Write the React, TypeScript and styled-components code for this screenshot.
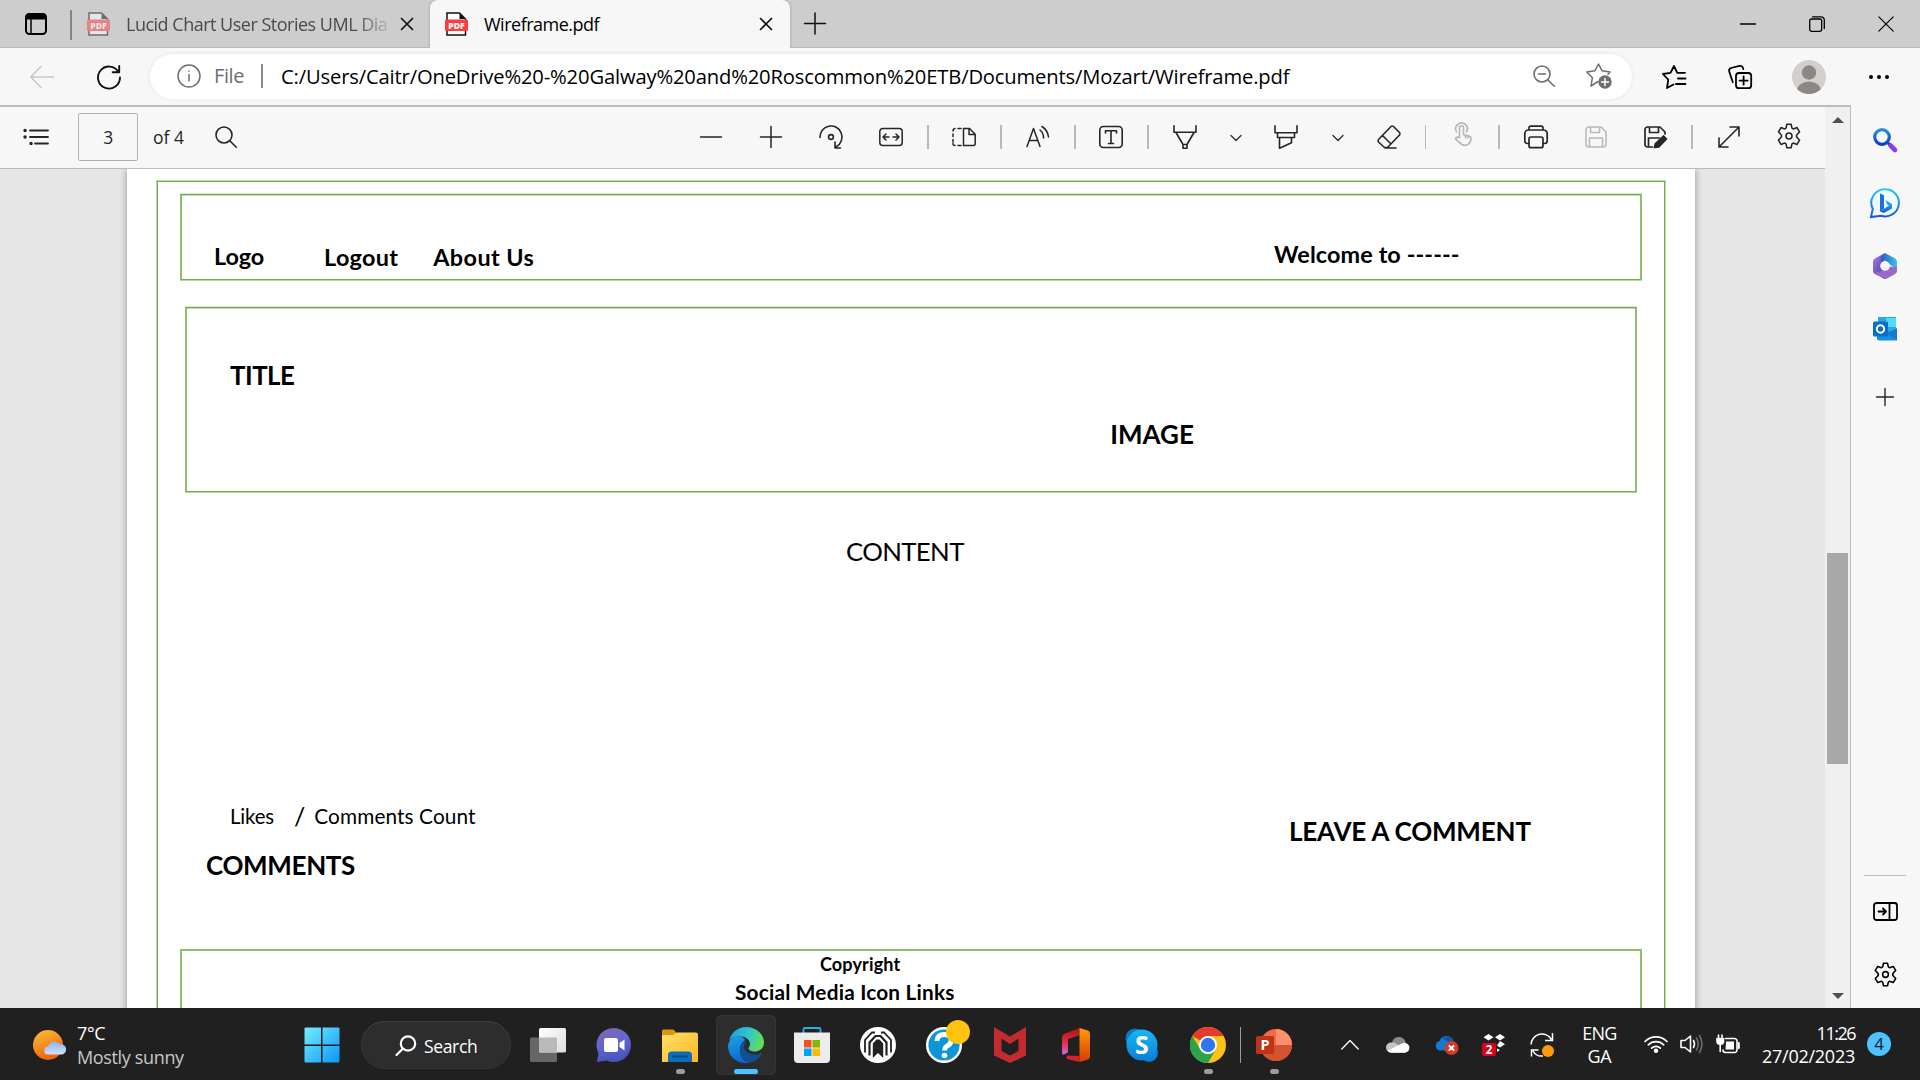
import React from "react";
import styled, { createGlobalStyle, css } from "styled-components";

const UI = `"Open Sans", "Noto Sans", sans-serif`;
const DOC = `Lato, "Open Sans", sans-serif`;
const GREEN = "#70ad47";
const SOFT_GREEN = "#8ebf6c";

const Global = createGlobalStyle`
  *, *::before, *::after { box-sizing: border-box; }
  html, body { margin: 0; padding: 0; overflow: hidden; }
  body { font-family: ${UI}; color: #000; }
  svg { display: block; flex: none; overflow: visible; }
`;

const Desktop = styled.div`
  width: 1920px;
  height: 1080px;
  display: flex;
  flex-direction: column;
  overflow: hidden;
  background: #f7f7f7;
`;

const Label = styled.span<{
  $size: number;
  $ls?: number;
  $bold?: boolean;
  $color?: string;
  $lh?: number;
  $ml?: number;
  $mt?: number;
}>`
  display: block;
  flex: none;
  width: max-content;
  white-space: pre;
  font-family: ${UI};
  font-size: ${(p) => p.$size}px;
  font-weight: ${(p) => (p.$bold ? 700 : 400)};
  letter-spacing: ${(p) => p.$ls ?? 0}px;
  line-height: ${(p) => p.$lh ?? 30}px;
  color: ${(p) => p.$color ?? "#000"};
  margin-left: ${(p) => p.$ml ?? 0}px;
  margin-top: ${(p) => p.$mt ?? 0}px;
`;
const DocText = styled(Label)`
  font-family: ${DOC};
`;

/* ---------- generic pieces ---------- */

const Slot = styled.div<{ $w: number; $dy?: number; $pl?: number }>`
  flex: none;
  width: ${(p) => p.$w}px;
  height: 100%;
  display: flex;
  align-items: center;
  justify-content: center;
  position: relative;
  padding-left: ${(p) => p.$pl ?? 0}px;
  padding-top: ${(p) => (p.$dy && p.$dy > 0 ? p.$dy * 2 : 0)}px;
  padding-bottom: ${(p) => (p.$dy && p.$dy < 0 ? -p.$dy * 2 : 0)}px;
`;
const Spacer = styled.div`
  flex: 1;
`;

type IconProps = { w?: number; h?: number; vb?: string; c?: string; sw?: number; children: React.ReactNode };
const Line = ({ w = 24, h = 24, vb, c = "#262626", sw = 1.5, children }: IconProps) => (
  <svg width={w} height={h} viewBox={vb ?? `0 0 ${w} ${h}`} fill="none" stroke={c} strokeWidth={sw} strokeLinecap="round" strokeLinejoin="round">
    {children}
  </svg>
);
const Art = ({ w, h, children }: { w: number; h: number; children: React.ReactNode }) => (
  <svg width={w} height={h} viewBox={`0 0 ${w} ${h}`}>{children}</svg>
);

const Gear = ({ c = "#262626", s = 26 }: { c?: string; s?: number }) => (
  <Line w={s} h={s} vb="0 0 26 26" c={c} sw={1.6}>
    <path d="M10.9 1.2h4.2l.7 3.2a1.600 1.600 0 002.200 1.300l3-1.100 2.600 4.200-2.300 2.400a2.600 2.600 0 000 3.600l2.300 2.400-2.600 4.200-3-1.100a1.600 1.600 0 00-2.200 1.300l-.7 3.200h-4.200l-.7-3.200A1.600 1.600 0 008 20.300l-3 1.100-2.600-4.200 2.300-2.400a2.600 2.600 0 000-3.600L2.400 8.800 5 4.600l3 1.100a1.600 1.600 0 002.200-1.300z" />
    <circle cx="13" cy="13" r="3" />
  </Line>
);
const Cross = () => (
  <Line w={14} h={14} c="#111" sw={1.7}><path d="M1.5 1.5l11 11M12.5 1.5l-11 11" /></Line>
);
const Magnifier = ({ c, minus }: { c?: string; minus?: boolean }) => (
  <Line w={22} h={22} c={c} sw={1.6}>
    <circle cx="9" cy="9" r="8" />
    <path d="M15 15l6.300 6.300" />
    {minus && <path d="M5.5 9h7" />}
  </Line>
);
const Chevron = () => (
  <Line w={12} h={8} sw={1.2}><path d="M1 1.500l5 5 5-5" /></Line>
);

/* ---------- tab strip ---------- */

const TabStrip = styled.header`
  flex: none;
  height: 48px;
  display: flex;
  background: #cdcdcd;
  box-shadow: inset 0 -1px 0 #b9b9b9;
`;
const TabDivider = styled.i`
  width: 2px;
  height: 30px;
  margin: 10px 0 0 10px;
  background: #858585;
`;
const Tab = styled.div<{ $active?: boolean; $w: number }>`
  flex: none;
  width: ${(p) => p.$w}px;
  height: 48px;
  display: flex;
  align-items: center;
  padding: 0 ${(p) => (p.$active ? 17 : 16)}px 0 15px;
  ${(p) =>
    p.$active &&
    css`
      background: #f7f7f7;
      border-radius: 8px 8px 0 0;
      box-shadow: 0 0 3px rgba(0, 0, 0, 0.25);
      clip-path: inset(0 -4px 0 -4px);
    `}
`;
const TabTitle = styled.div<{ $fade?: boolean }>`
  flex: none;
  margin-left: 16px;
  padding-bottom: 1px;
  ${(p) => p.$fade && css`mask-image: linear-gradient(90deg, #000 88%, rgba(0, 0, 0, 0.2) 100%);`}
`;

const PdfIcon = ({ dim }: { dim?: boolean }) => (
  <svg width="23" height="24" viewBox="0 0 23 24" opacity={dim ? 0.5 : 1}>
    <path d="M2 1h12.500l6 6v16H2z" fill="#fff" stroke="#111" strokeWidth="1.500" />
    <path d="M14.500 1v6h6z" fill="#111" />
    <rect x="0" y="7.500" width="23" height="11.500" rx="1" fill="#ff3b3b" />
    <text x="11.500" y="16.500" textAnchor="middle" fontFamily="Open Sans, sans-serif" fontWeight="800" fontSize="8.600" fill="#fff">PDF</text>
  </svg>
);

/* ---------- address bar ---------- */

const NavBar = styled.nav`
  flex: none;
  height: 57px;
  display: flex;
  align-items: center;
  background: #f7f7f7;
`;
const Address = styled.div`
  flex: none;
  width: 1482px;
  height: 45px;
  margin: 0 0 1px 17px;
  display: flex;
  align-items: center;
  padding-left: 27px;
  background: #fff;
  border-radius: 23px;
  box-shadow: 0 0 5px rgba(0, 0, 0, 0.08);
`;
const AddressDivider = styled.i`
  width: 2px;
  height: 24px;
  background: #8d8d8d;
  margin: 0 18px 0 17px;
`;
const Avatar = styled.div`
  width: 34px;
  height: 34px;
  border-radius: 50%;
  overflow: hidden;
  background: #d2d0cd;
`;

/* ---------- middle ---------- */

const Middle = styled.div`
  flex: none;
  height: 903px;
  display: flex;
`;
const Viewer = styled.main`
  flex: none;
  width: 1851px;
  display: flex;
  border-top: 2px solid #bcbcbc;
  border-right: 1px solid #bcbcbc;
`;
const ViewerBody = styled.div`
  flex: none;
  width: 1825px;
  display: flex;
  flex-direction: column;
`;
const PdfBar = styled.div`
  flex: none;
  height: 62px;
  display: flex;
  align-items: center;
  padding: 0 2px 2px 0;
  background: #f7f7f7;
  border-bottom: 1px solid #bcbcbc;
`;
const PageBox = styled.div`
  width: 60px;
  height: 48px;
  margin: 0 15px 0 18px;
  display: flex;
  align-items: center;
  justify-content: center;
  border: 1px solid #b2b2b2;
  border-radius: 2px;
`;
const Sep = styled.i`
  width: 1.5px;
  height: 24px;
  background: #b9b9b9;
`;
const Canvas = styled.div`
  flex: none;
  height: 839px;
  overflow: hidden;
  background: #e6e6e6;
  padding-left: 127px;
`;
const Page = styled.article`
  width: 1568px;
  height: 860px;
  padding: 12px 0 0 30px;
  background: #fff;
  box-shadow: 0 0 7px rgba(0, 0, 0, 0.38);
`;
const PageFrame = styled.div`
  width: 1508px;
  height: 860px;
  border: 1px solid ${GREEN};
  box-shadow: 0 0 0 1px rgba(112, 173, 71, 0.45);
`;
const Panel = styled.section<{ $w: number; $h: number; $ml: number; $mt: number }>`
  width: ${(p) => p.$w}px;
  height: ${(p) => p.$h}px;
  margin: ${(p) => p.$mt}px 0 0 ${(p) => p.$ml}px;
  display: flex;
  border: solid;
  border-width: 1px 2px;
  border-color: ${GREEN} ${SOFT_GREEN};
  box-shadow: 0 -1px 0 rgba(112, 173, 71, 0.25), 0 1px 0 rgba(112, 173, 71, 0.5), inset 0 1px 0 rgba(112, 173, 71, 0.45);
`;
const FooterPanel = styled(Panel)`
  flex-direction: column;
  border-width: 2px 2px 0;
  border-color: ${SOFT_GREEN};
  box-shadow: none;
`;
const Discussion = styled.section`
  display: flex;
  height: 98px;
  margin-top: 235px;
`;
const DiscussionLeft = styled.div`
  width: 1131px;
`;
const Counts = styled.div`
  display: flex;
  height: 30px;
  margin-left: 72px;
`;

const ScrollTrack = styled.div`
  flex: none;
  width: 25px;
  display: flex;
  flex-direction: column;
  align-items: center;
  background: #f0f0f0;
`;
const Thumb = styled.div`
  width: 21px;
  height: 211px;
  margin: 430px 0 229px;
  background: #a8a8a8;
`;
const Arrow = styled.i<{ $down?: boolean }>`
  border: 6px solid transparent;
  border-top: ${(p) => (p.$down ? "6px solid #505050" : "0")};
  border-bottom: ${(p) => (p.$down ? "0" : "6px solid #505050")};
  margin-top: ${(p) => (p.$down ? 0 : 10)}px;
`;
const Sidebar = styled.aside`
  flex: 1;
  display: flex;
  flex-direction: column;
  align-items: center;
  padding-right: 1px;
  padding-bottom: 6px;
  background: #f7f7f7;
`;
const SideCell = styled.div<{ $h: number }>`
  flex: none;
  height: ${(p) => p.$h}px;
  display: flex;
  align-items: center;
  justify-content: center;
`;
const SideRule = styled.i`
  width: 42px;
  height: 1px;
  background: #bcbcbc;
`;

/* ---------- taskbar ---------- */

const Taskbar = styled.footer`
  flex: none;
  height: 72px;
  display: flex;
  align-items: center;
  padding-top: 2px;
  background: #202020;
`;
const Weather = styled.div`
  width: 262px;
  display: flex;
  align-items: center;
  padding-left: 33px;
  margin-right: 26px;
`;
const Stack = styled.div<{ $align?: string; $w?: number; $ml?: number; $mr?: number }>`
  display: flex;
  flex-direction: column;
  align-items: ${(p) => p.$align ?? "flex-start"};
  width: ${(p) => (p.$w ? p.$w + "px" : "auto")};
  margin-left: ${(p) => p.$ml ?? 0}px;
  margin-right: ${(p) => p.$mr ?? 0}px;
`;
const SearchPill = styled.div`
  flex: none;
  width: 150px;
  height: 48px;
  margin: 0 4px 0 6px;
  padding: 0 0 0 34px;
  display: flex;
  align-items: center;
  border-radius: 24px;
  background: #2d2d2d;
  box-shadow: inset 0 1px 0 #3d3d3d, inset 0 0 0 1px #333;
  gap: 8px;
`;
const ActiveTile = styled.div`
  width: 60px;
  height: 60px;
  border-radius: 6px;
  display: flex;
  align-items: center;
  justify-content: center;
  background: #2d2d2d;
  box-shadow: inset 0 0 0 1px #353535, inset 0 1px 0 #434343;
`;
const Running = styled.i<{ $active?: boolean }>`
  position: absolute;
  left: 50%;
  bottom: 6px;
  width: ${(p) => (p.$active ? 24 : 9)}px;
  height: 5px;
  margin-left: ${(p) => (p.$active ? -12 : -4.5)}px;
  border-radius: 3px;
  background: ${(p) => (p.$active ? "#4cc2ff" : "#9b9b9b")};
`;
const AlertDot = styled.i`
  position: absolute;
  left: 35px;
  top: 10px;
  width: 24px;
  height: 24px;
  border-radius: 50%;
  background: #ffc20e;
`;
const TaskDivider = styled.i`
  width: 1px;
  height: 36px;
  margin-left: -1px;
  background: #9a9a9a;
`;
const NotifyBadge = styled.div`
  width: 24px;
  height: 24px;
  margin: 0 29px 2px 12px;
  border-radius: 50%;
  display: flex;
  align-items: center;
  justify-content: center;
  background: #4cc2ff;
`;

export default function App() {
  return (
    <Desktop>
      <Global />
      <TabStrip>
        <Slot $w={60} $pl={12}>
          <Line w={22} h={22} c="#000" sw={2}>
            <rect x="1" y="1" width="20" height="20" rx="3.500" />
            <path d="M1.500 5.500V4a3 3 0 013-3h13a3 3 0 013 3v1.500z" fill="#000" />
            <path d="M6 6v15" strokeWidth="1.500" />
          </Line>
        </Slot>
        <TabDivider />
        <Tab $w={358}>
          <PdfIcon dim />
          <TabTitle $fade><Label $size={18} $ls={-0.5} $color="#4a4a4a">Lucid Chart User Stories UML Dia</Label></TabTitle>
          <Spacer />
          <Cross />
        </Tab>
        <Tab $w={360} $active>
          <PdfIcon />
          <TabTitle><Label $size={18} $ls={-0.5}>Wireframe.pdf</Label></TabTitle>
          <Spacer />
          <Cross />
        </Tab>
        <Slot $w={50}><Line w={22} h={22} c="#111"><path d="M.5 10.500h21M11 0v21" /></Line></Slot>
        <Spacer />
        <Slot $w={69}><Line w={16} h={16} c="#000" sw={1.3}><path d="M.5 8h15" /></Line></Slot>
        <Slot $w={69}>
          <Line w={16} h={16} c="#000" sw={1.3}>
            <rect x=".7" y="3" width="12" height="12.300" rx="2" />
            <path d="M3.500.8h8.500a3.300 3.300 0 013.300 3.300v8.500" />
          </Line>
        </Slot>
        <Slot $w={69}><Line w={16} h={16} c="#000" sw={1.2}><path d="M.8.8l14.400 14.400M15.200.8L.8 15.200" /></Line></Slot>
      </TabStrip>

      <NavBar>
        <Slot $w={84}><Line c="#c9c9c9" sw={1.6}><path d="M23.500 12H1M11 1.500L.8 12 11 22.500" /></Line></Slot>
        <Slot $w={49}>
          <Line c="#111" sw={1.9}><path d="M21.500 7A11 11 0 1023 12.500M22.200 1v6.300h-6.500" /></Line>
        </Slot>
        <Address>
          <Line c="#6e6e6e"><circle cx="12" cy="12" r="11" /><path d="M12 10.500V17M12 7v.3" /></Line>
          <Label $size={20} $ls={-0.4} $ml={13} $color="#6e6e6e">File</Label>
          <AddressDivider />
          <Label $size={20.2} $ls={-0.16}>C:/Users/Caitr/OneDrive%20-%20Galway%20and%20Roscommon%20ETB/Documents/Mozart/Wireframe.pdf</Label>
          <Spacer />
          <Slot $w={43}><Magnifier c="#6e6e6e" minus /></Slot>
          <Slot $w={67}>
            <Line w={26} h={26} c="#6e6e6e">
              <path d="M12 18.500L5 23l1.400-8.300L.8 9l8-1.200L12.500 1 16 7.800l8 1.200-2 2.300" />
              <circle cx="19" cy="19" r="6.700" fill="#6e6e6e" stroke="none" />
              <path d="M19 15.500v7M15.500 19h7" stroke="#fff" />
            </Line>
          </Slot>
        </Address>
        <Slot $w={84}>
          <Line c="#000" sw={1.8}>
            <path d="M11.500 19.500L5 23l1.300-8.300L.8 9l7.700-1.200L12 1l3.300 6.800H23M16 13.500h7.500M14 19h9.500" />
          </Line>
        </Slot>
        <Slot $w={48}>
          <Line c="#000" sw={1.8}>
            <rect x="8" y="8" width="15.200" height="15.200" rx="3" />
            <path d="M15.600 11.500v8.200M11.500 15.600h8.200" />
            <path d="M4.800 17.200L1.200 6.500A3 3 0 013 3L11.500.9a3 3 0 013.500 2l.3 1.200" />
          </Line>
        </Slot>
        <Slot $w={90}>
          <Avatar>
            <Art w={34} h={34}>
              <circle cx="17" cy="12.500" r="7.200" fill="#8b8784" />
              <ellipse cx="17" cy="31" rx="12" ry="9.500" fill="#8b8784" />
            </Art>
          </Avatar>
        </Slot>
        <Slot $w={49}>
          <Art w={22} h={6}><circle cx="3" cy="3" r="2" /><circle cx="11" cy="3" r="2" /><circle cx="19" cy="3" r="2" /></Art>
        </Slot>
      </NavBar>

      <Middle>
        <Viewer>
          <ViewerBody>
            <PdfBar>
              <Slot $w={60} $pl={12}>
                <Line w={26} h={18} sw={1.8}>
                  <path d="M7 2.500h18M7 9h18M12 15.500h13" />
                  <path d="M2 2.500h.1M2 9h.1M8 15.500h.1" strokeWidth="3.400" />
                </Line>
              </Slot>
              <PageBox><Label $size={17.5} $ls={-0.3} $color="#262626">3</Label></PageBox>
              <Label $size={17.5} $color="#262626">of 4</Label>
              <Slot $w={84}><Magnifier /></Slot>
              <Spacer />
              <Slot $w={60}><Line w={22} h={22}><path d="M.5 11h21" /></Line></Slot>
              <Slot $w={60}><Line w={22} h={22}><path d="M.5 11h21M11 .5v21" /></Line></Slot>
              <Slot $w={60}>
                <Line sw={1.6}><path d="M1 12.500A11 11 0 1117.500 21.500M16 17v6h5.500" /><circle cx="12" cy="12" r="2.400" /></Line>
              </Slot>
              <Slot $w={60}>
                <Line><rect x=".8" y="3.500" width="22.400" height="17" rx="3" /><path d="M10 12H4.500M7 9l-3 3 3 3M14 12h5.500M17 9l3 3-3 3" /></Line>
              </Slot>
              <Slot $w={14}><Sep /></Slot>
              <Slot $w={58}>
                <Line>
                  <path d="M9 3.500H6M3 3.500A2.500 2.500 0 001 6M1 9v2.500M1 14.500V17M1 18.500a2 2 0 002 2M6 20.500h3" />
                  <path d="M11.500 3.500h6l5.700 5.700v9.300a2 2 0 01-2 2h-9.700zM17 3.500v6h6" />
                </Line>
              </Slot>
              <Slot $w={16}><Sep /></Slot>
              <Slot $w={58}>
                <Line><path d="M1 21.500L7.500 3.500 14 21.500M3.300 15.500h8.500M14 5a10 10 0 013.500 8M16 1.500a14 14 0 016.500 10.500" /></Line>
              </Slot>
              <Slot $w={16}><Sep /></Slot>
              <Slot $w={56}>
                <Line sw={1.6}><rect x=".8" y="1.500" width="22.400" height="21" rx="3.500" /><path d="M6.500 8V5.800h11V8M12 6v12.500M9.500 18.500h5" /></Line>
              </Slot>
              <Slot $w={18}><Sep /></Slot>
              <Slot $w={56}>
                <Line sw={1.6}><path d="M1 .8v6.500h22V.8M3 7.500l7 12h4l7-12M10 19.500v3.700h4v-3.700" /></Line>
              </Slot>
              <Slot $w={46} $dy={1.5}><Chevron /></Slot>
              <Slot $w={54}>
                <Line sw={1.6}><path d="M1 .8v7h22v-7M3.500 8v4.500h17V8M5.500 12.500v10.700l12-5.500v-5.200" /></Line>
              </Slot>
              <Slot $w={50} $dy={1.5}><Chevron /></Slot>
              <Slot $w={52}>
                <Line sw={1.6}><path d="M14 1.500a2 2 0 012.500 0l6 6a2 2 0 010 2.500L10.500 22.500H7.500L1.500 17a2 2 0 010-2.500zM5.500 10.500l8.500 8.500M8 23h11" /></Line>
              </Slot>
              <Slot $w={21}><Sep /></Slot>
              <Slot $w={52} $dy={-2.5}>
                <Line c="#b5b5b5" sw={1.6}>
                  <path d="M9.500 15.500V5.800a2 2 0 014 0v7l5.500 1.300a2.500 2.500 0 012 2.700c-.5 4-2.500 6.500-6.500 6.500-3.500 0-4.500-2.500-9-6.500.6-1.700 2.300-1.900 4-1.300zM6.500 9.800a5.800 5.800 0 1110 0M15.500 13.500v2.500M18 14v2" />
                </Line>
              </Slot>
              <Slot $w={22}><Sep /></Slot>
              <Slot $w={52}>
                <Line sw={1.7}>
                  <path d="M5 18.500H3.500a2.700 2.700 0 01-2.700-2.700V8.500A3.500 3.500 0 014.300 5h15.400a3.500 3.500 0 013.500 3.500v7.300a2.700 2.700 0 01-2.700 2.700H19M5 5V3a1.800 1.800 0 011.800-1.800h10.400A1.800 1.800 0 0119 3v2" />
                  <rect x="5" y="12" width="14" height="10.700" rx="2" />
                </Line>
              </Slot>
              <Slot $w={68} $dy={0.5}>
                <Line w={22} h={22} c="#b9b9b9" sw={1.6}>
                  <path d="M3.500 1h12.500l5 5v12.500a2.500 2.500 0 01-2.500 2.500h-15A2.500 2.500 0 011 18.500v-15A2.500 2.500 0 013.500 1zM5.500 1v5.500h9V1M4.500 21v-9h13v9" />
                </Line>
              </Slot>
              <Slot $w={52} $dy={0.5}>
                <Line sw={1.7}>
                  <path d="M8.500 22H3.500A2.500 2.500 0 011 19.500v-15A2.500 2.500 0 013.500 2h12.500l5 5v2M5.500 2v5.500h9V2M4.500 22v-9h11" />
                  <path d="M10.500 22.500l1-4 8-7.500 3 3-7.700 8z" fill="#262626" />
                </Line>
              </Slot>
              <Slot $w={20}><Sep /></Slot>
              <Slot $w={53}>
                <Line w={22} h={22} sw={1.6}><path d="M1 21L21 1M12 1h9v9M1 12v9h9" /></Line>
              </Slot>
              <Slot $w={68} $dy={-0.5}><Gear /></Slot>
            </PdfBar>

            <Canvas>
              <Page>
                <PageFrame>
                  <Panel $w={1462} $h={86} $ml={22} $mt={12}>
                    <DocText $bold $size={23.4} $ls={-0.1} $mt={46} $ml={32}>Logo</DocText>
                    <DocText $bold $size={23.4} $ls={0.3} $mt={47} $ml={60}>Logout</DocText>
                    <DocText $bold $size={23.4} $ls={0.4} $mt={47} $ml={35}>About Us</DocText>
                    <DocText $bold $size={23.4} $ls={0.1} $mt={44} $ml={740}>Welcome to ------</DocText>
                  </Panel>
                  <Panel $w={1452} $h={185} $ml={27} $mt={27}>
                    <DocText $bold $size={25.8} $ls={-0.5} $mt={52} $ml={43}>TITLE</DocText>
                    <DocText $bold $size={26} $mt={111} $ml={816}>IMAGE</DocText>
                  </Panel>
                  <DocText $size={25.8} $ls={-0.65} $mt={44} $ml={688}>CONTENT</DocText>
                  <Discussion>
                    <DiscussionLeft>
                      <Counts>
                        <DocText $size={20.4} $ls={-0.15}>Likes</DocText>
                        <DocText $size={25} $ml={20}>/</DocText>
                        <DocText $size={20.8} $ls={0.1} $ml={9}>Comments Count</DocText>
                      </Counts>
                      <DocText $bold $size={26} $ls={-0.35} $mt={19} $ml={48}>COMMENTS</DocText>
                    </DiscussionLeft>
                    <DocText $bold $size={26} $ls={-0.18} $mt={15}>LEAVE A COMMENT</DocText>
                  </Discussion>
                  <FooterPanel $w={1462} $h={100} $ml={22} $mt={50}>
                    <DocText $bold $size={18} $ls={0.15} $mt={-2} $ml={638}>Copyright</DocText>
                    <DocText $bold $size={20.8} $ls={0.2} $mt={-2} $ml={553}>Social Media Icon Links</DocText>
                  </FooterPanel>
                </PageFrame>
              </Page>
            </Canvas>
          </ViewerBody>
          <ScrollTrack><Arrow /><Thumb /><Arrow $down /></ScrollTrack>
        </Viewer>

        <Sidebar>
          <SideCell $h={69}>
            <Art w={24} h={24}>
              <defs><linearGradient id="lens" x1="0" y1="0" x2="0" y2="1"><stop offset="0" stopColor="#2a8fd8" /><stop offset="1" stopColor="#0a3fd0" /></linearGradient></defs>
              <path d="M15 15l3 3" stroke="#333" strokeWidth="3" />
              <path d="M17.500 17.500l4.500 4.500" stroke="#8b3cf0" strokeWidth="4.600" strokeLinecap="round" />
              <circle cx="9" cy="9" r="7.300" fill="#f7fbff" stroke="url(#lens)" strokeWidth="3.200" />
            </Art>
          </SideCell>
          <SideCell $h={57}>
            <Art w={30} h={30}>
              <defs><linearGradient id="bing" x1="0" y1="0" x2="0" y2="1"><stop offset="0" stopColor="#2cc4f0" /><stop offset="1" stopColor="#1b56d8" /></linearGradient></defs>
              <path d="M15.500 1.200a13.600 13.600 0 11-4.500 26.500L1 29l1.800-8A13.600 13.600 0 0115.500 1.200z" fill="#eefaff" stroke="url(#bing)" strokeWidth="2" />
              <path d="M10 5.500l4 1.700v13.500l-4 3z" fill="#1b6fe0" />
              <path d="M10 23.500l4 1.500 8-4.500v-4.500l-6.500-4 1.500 4.500 2 1z" fill="url(#bing)" />
            </Art>
          </SideCell>
          <SideCell $h={69}>
            <Art w={24} h={26}>
              <defs>
                <linearGradient id="m1" x1="0" y1="0" x2="1" y2="1"><stop offset="0" stopColor="#b57be0" /><stop offset="1" stopColor="#3a3fa8" /></linearGradient>
                <linearGradient id="m2" x1="0" y1="0" x2="1" y2="0"><stop offset="0" stopColor="#2a5ac8" /><stop offset="1" stopColor="#3cc0ee" /></linearGradient>
              </defs>
              <path d="M12 0L2 5.500Q0 6.500 0 9v9q0 2 2 3l3 1.500 7-5-4-4V8z" fill="url(#m1)" />
              <path d="M12 0l10 5.500q2 1 2 3.500v7l-8-5-4-3.500-4 3V3z" fill="url(#m2)" />
              <path d="M24 14v4q0 2-2 3l-8 4.500q-2 1-4 0L1 20l11-3 5-3.500z" fill="#9a68c8" />
              <circle cx="12" cy="13" r="4.800" fill="#f7f7f7" />
            </Art>
          </SideCell>
          <SideCell $h={59}>
            <Art w={25} h={25}>
              <rect x="5" y="0" width="18" height="17" fill="#28a8ea" />
              <rect x="13" y="1" width="10" height="9" fill="#50d9ff" />
              <path d="M4 14h20v9.500H6a2 2 0 01-2-2z" fill="#1490df" />
              <path d="M24 11v12L14 17z" fill="#1a78c8" />
              <rect x="0" y="4.500" width="15" height="15" rx="1.500" fill="#0a6fc8" />
              <circle cx="7.500" cy="12" r="3.700" fill="none" stroke="#fff" strokeWidth="2" />
            </Art>
          </SideCell>
          <SideCell $h={75}><Line w={18} h={18} sw={1.4}><path d="M9 .5v17M.5 9h17" /></Line></SideCell>
          <Spacer />
          <SideRule />
          <SideCell $h={70}>
            <Line w={25} h={19} c="#000" sw={1.8}><rect x="1" y="1" width="23" height="17" rx="2.500" /><path d="M16.500 1v17M5.500 9.500h7M10 6.500l3 3-3 3" /></Line>
          </SideCell>
          <SideCell $h={56}><Gear c="#000" s={25} /></SideCell>
        </Sidebar>
      </Middle>

      <Taskbar>
        <Weather>
          <Art w={34} h={32}>
            <defs>
              <linearGradient id="sun" x1="0" y1="0" x2=".4" y2="1"><stop offset="0" stopColor="#f9c23c" /><stop offset="1" stopColor="#f0640c" /></linearGradient>
              <linearGradient id="cl" x1="0" y1="0" x2="0" y2="1"><stop offset="0" stopColor="#8fb4f0" /><stop offset="1" stopColor="#cfe2fb" /></linearGradient>
            </defs>
            <circle cx="15" cy="16" r="15" fill="url(#sun)" />
            <path d="M15.500 25.500a4 4 0 01-.3-8 6.500 6.500 0 0111.500-2 4.800 4.800 0 012.600 10z" fill="url(#cl)" />
          </Art>
          <Stack $ml={10}>
            <Label $size={18} $ls={-0.4} $lh={24} $color="#fff">7°C</Label>
            <Label $size={18} $ls={-0.35} $lh={24} $color="#c8c8c8">Mostly sunny</Label>
          </Stack>
        </Weather>
        <Slot $w={67}>
          <Art w={36} h={36}>
            <defs><linearGradient id="win" gradientUnits="userSpaceOnUse" x1="0" y1="0" x2="36" y2="36"><stop offset="0" stopColor="#76eeff" /><stop offset="1" stopColor="#0a94fa" /></linearGradient></defs>
            <path d="M1.500.5H17v17H.5v-16a1 1 0 011-1zM18.500.5h16a1 1 0 011 1v16h-17zM.5 19H17v16.500H1.500a1 1 0 01-1-1zM18.500 19h17v15.500a1 1 0 01-1 1h-16z" fill="url(#win)" />
          </Art>
        </Slot>
        <SearchPill>
          <Line w={21} h={21} c="#fff" sw={2.2}><circle cx="13" cy="8.500" r="7.200" /><path d="M7.500 14l-6 6" /></Line>
          <Label $size={17.6} $ls={-0.4} $mt={1} $color="#fff">Search</Label>
        </SearchPill>
        <Slot $w={66}>
          <Art w={36} h={34}>
            <defs><linearGradient id="tv" x1="0" y1="0" x2="1" y2="1"><stop offset="0" stopColor="#fff" /><stop offset="1" stopColor="#ddd" /></linearGradient></defs>
            <rect x="0" y="9.500" width="27" height="24.500" rx="1.500" fill="#666" />
            <rect x="9" y="0" width="27" height="24.500" rx="1.500" fill="url(#tv)" />
            <path d="M9 9.500h18v15H9z" fill="#b9b9b9" />
          </Art>
        </Slot>
        <Slot $w={66}>
          <Art w={34} h={34}>
            <defs><linearGradient id="chat" x1="0" y1="0" x2=".3" y2="1"><stop offset="0" stopColor="#8a63b0" /><stop offset=".5" stopColor="#6268d0" /><stop offset="1" stopColor="#4b53bc" /></linearGradient></defs>
            <path d="M17 0a17 17 0 11-7 32.500L0 34l1.500-9A17 17 0 0117 0z" fill="url(#chat)" />
            <rect x="7" y="10" width="14" height="14" rx="2" fill="#fff" />
            <path d="M22.500 15l5-3.500v11l-5-3.500z" fill="#fff" />
          </Art>
        </Slot>
        <Slot $w={66} $dy={0.5}>
          <Art w={36} h={34}>
            <defs><linearGradient id="fo" x1="0" y1="0" x2="1" y2="1"><stop offset="0" stopColor="#ffe06b" /><stop offset="1" stopColor="#fab81e" /></linearGradient></defs>
            <path d="M0 2a1.500 1.500 0 011.500-1.500h10l4 4.500-2 3H0z" fill="#d9980c" />
            <path d="M0 6h11l4-2.500h19a2 2 0 012 2V33H0z" fill="url(#fo)" />
            <path d="M6 33V26a3.500 3.500 0 013.500-3.500h17A3.500 3.500 0 0130 26v7z" fill="#0f6cbd" />
            <path d="M11 27.500h14" stroke="#0a4a86" strokeWidth="2" strokeLinecap="round" />
          </Art>
          <Running />
        </Slot>
        <Slot $w={66}>
          <ActiveTile>
            <Art w={36} h={36}>
              <defs>
                <linearGradient id="e1" x1="0" y1=".3" x2="1" y2=".5"><stop offset="0" stopColor="#1f9fe0" /><stop offset=".5" stopColor="#2cc3d5" /><stop offset="1" stopColor="#66e04f" /></linearGradient>
                <linearGradient id="e2" x1="0" y1="0" x2=".3" y2="1"><stop offset="0" stopColor="#1fa0e6" /><stop offset="1" stopColor="#0b6ad0" /></linearGradient>
              </defs>
              <path d="M1 14C3 5.500 10 0 18 0c10 0 18 7 18 15.500 0 5.500-4 9-9 9-4 0-6.500-1.500-6.500-3 0-1 1.500-2 1.500-4.500C22 13 18 9.500 12.500 9.500 7 9.500 3 11.500 1 14z" fill="url(#e1)" />
              <path d="M12 23c0-5 2.500-8.500 5-10-1-2-3-3.500-6-3.500C5 9.500 0 14 0 19c0 10 8 17 18 17 1.500 0 3-.2 4-.6C16 35 12 29.500 12 23z" fill="url(#e2)" />
              <path d="M17.500 13C14 15 12 19 12 23c0 7 5 12 10.500 12.300 5-1 9-4 11.200-8 .5-1-.3-1.300-1-.9-1.500.8-3.700 1.200-5.700 1.200C21 27.600 16 24 16 19.500c0-2.500 2.300-3.500 1.500-6.500z" fill="#124f98" />
            </Art>
          </ActiveTile>
          <Running $active />
        </Slot>
        <Slot $w={66}>
          <Art w={36} h={36}>
            <path d="M9.500 7V2.500A1.500 1.500 0 0111 1h14a1.500 1.500 0 011.500 1.500V7" fill="none" stroke="#2aaeea" strokeWidth="1.800" />
            <path d="M0 5.500h36V32a4 4 0 01-4 4H4a4 4 0 01-4-4z" fill="#ececec" />
            <path d="M10 13h7.500v7.500H10z" fill="#f25022" />
            <path d="M18.500 13H26v7.500h-7.500z" fill="#7fba00" />
            <path d="M10 21.500h7.500V29H10z" fill="#00a4ef" />
            <path d="M18.500 21.500H26V29h-7.500z" fill="#ffb900" />
          </Art>
        </Slot>
        <Slot $w={66}>
          <Art w={36} h={36}>
            <circle cx="18" cy="18" r="18" fill="#fff" />
            <path d="M5 25.500V13l7-7.500h3M31 25.500V13l-7-7.500h-3" fill="none" stroke="#222" strokeWidth="1.800" />
            <path d="M9.500 28.500V15.500l6-6.500h5l6 6.500v13" fill="none" stroke="#222" strokeWidth="2.200" />
            <path d="M12.800 31V16.500l3.700-4h3l3.700 4V31L18 26z" fill="#222" />
          </Art>
        </Slot>
        <Slot $w={66}>
          <Art w={36} h={36}>
            <circle cx="18" cy="18" r="16.800" fill="#0d95d8" stroke="#fff" strokeWidth="2.400" />
            <path d="M11 14q0-6.500 7.200-6.500 7 0 7 5.500 0 4-4.200 6.200-2.300 1.300-2.300 4.300" fill="none" stroke="#fff" strokeWidth="4.800" />
            <circle cx="18.500" cy="28.500" r="2.800" fill="#fff" />
          </Art>
          <AlertDot />
        </Slot>
        <Slot $w={66}>
          <Art w={32} h={36}><path d="M0 0l16 9.500L32 0v28.500L16 36 0 28.500zM7.500 11.500v12.500L16 28.500l8.500-4.500V11.500L16 17z" fill="#c32b2f" fillRule="evenodd" /></Art>
        </Slot>
        <Slot $w={66}>
          <Art w={28} h={34}>
            <defs>
              <linearGradient id="of" x1="0" y1="0" x2="0" y2="1"><stop offset="0" stopColor="#a8120c" /><stop offset=".55" stopColor="#e0304a" /><stop offset="1" stopColor="#c86ae0" /></linearGradient>
              <linearGradient id="of2" x1="0" y1="0" x2="0" y2="1"><stop offset="0" stopColor="#ff9a0a" /><stop offset="1" stopColor="#d83b01" /></linearGradient>
            </defs>
            <path d="M17.500 0L3 5.500Q0 7 0 10v14.500q0 3 2.500 1.800L6 24.500V11l11.500-4z" fill="url(#of)" />
            <path d="M17.500 0L26 2.500q2 1 2 3v23q0 2-2 3L17.500 34z" fill="url(#of2)" />
            <path d="M17.500 28v6L5 31q-1.500-2 0-3.500z" fill="#d4222e" />
          </Art>
        </Slot>
        <Slot $w={66}>
          <Art w={34} h={34}>
            <defs><linearGradient id="sk" x1="0" y1="0" x2="0" y2="1"><stop offset="0" stopColor="#16b8f4" /><stop offset="1" stopColor="#0d7fd8" /></linearGradient></defs>
            <circle cx="10" cy="10" r="9.500" fill="#0c7ac0" />
            <circle cx="24" cy="25" r="9" fill="#0d7fd8" />
            <circle cx="17" cy="17" r="15.500" fill="url(#sk)" />
            <text x="17" y="26" textAnchor="middle" fontFamily="Open Sans, sans-serif" fontWeight="700" fontSize="25" fill="#fff">S</text>
          </Art>
        </Slot>
        <Slot $w={66}>
          <Art w={36} h={36}>
            <circle cx="18" cy="18" r="18" fill="#fbc116" />
            <path d="M2.400 9A18 18 0 0133.600 9H18a9 9 0 00-7.800 4.500z" fill="#e33b2e" />
            <path d="M2.400 9A18 18 0 0018 36l7.800-13.500a9 9 0 01-15.600 0z" fill="#2ba24c" />
            <circle cx="18" cy="18" r="9" fill="#fff" />
            <circle cx="18" cy="18" r="7.200" fill="#2f76ee" />
          </Art>
          <Running />
        </Slot>
        <TaskDivider />
        <Slot $w={66}>
          <Art w={36} h={32}>
            <circle cx="20" cy="16" r="16" fill="#ed6c47" />
            <path d="M20 0a16 16 0 0116 16H20z" fill="#ff8f6b" />
            <path d="M4 16h32a16 16 0 01-32 0z" fill="#d35230" />
            <rect x="0" y="7" width="18" height="18" rx="1.500" fill="#bf3316" />
            <text x="9" y="21" textAnchor="middle" fontFamily="Open Sans, sans-serif" fontWeight="700" fontSize="14.500" fill="#fff">P</text>
          </Art>
          <Running />
        </Slot>
        <Spacer />
        <Slot $w={48} $dy={-1}><Line w={18} h={11} c="#fff" sw={1.3}><path d="M.8 10L9 1.500l8.200 8.500" /></Line></Slot>
        <Slot $w={48} $dy={-1}>
          <Art w={24} h={17}>
            <path d="M6 7a7 7 0 0113-2.500l1 4-8 3z" fill="#8a8a8a" />
            <path d="M5 16.500A5 5 0 015 6.500q2.500-.5 5 1l11 7-2 2z" fill="#c4c4c4" />
            <path d="M5 16.800q-2 0-3.500-2L16 7.500a5 5 0 113 9.300z" fill="#fff" />
          </Art>
        </Slot>
        <Slot $w={48}>
          <Art w={25} h={20}>
            <path d="M5 15.500A5 5 0 015.500 6 7.500 7.500 0 0119 4.500l2 8-6 3z" fill="#1479d0" />
            <path d="M8 3.500A7 7 0 0119 5l2 5-6-3z" fill="#0a58a8" />
            <circle cx="17.500" cy="13" r="7" fill="#d13a2a" />
            <path d="M14.800 10.300l5.400 5.400M20.200 10.300l-5.400 5.400" stroke="#fff" strokeWidth="1.900" />
          </Art>
        </Slot>
        <Slot $w={48}>
          <Art w={24} h={22}>
            <path d="M6.500 0l5 3.200-5 3.200-5-3.200zM18 0l5 3.200-5 3.200-5-3.200zM18 7l5 3.200-5 3.200-3-2zM15 14.500l3 1.500-3 2z" fill="#fff" />
            <rect x="0" y="9" width="14" height="13" rx="2" fill="#d8001c" />
            <text x="7" y="20" textAnchor="middle" fontFamily="Open Sans, sans-serif" fontWeight="700" fontSize="12" fill="#fff">2</text>
          </Art>
        </Slot>
        <Slot $w={48} $dy={-0.5}>
          <Art w={24} h={24}>
            <path d="M1 11.500A11 11 0 0121.500 6.500M22.500 0v7.500h-7.500M13 23a10 10 0 01-10-5M1.500 23.500V17h7" fill="none" stroke="#fff" strokeWidth="1.500" />
            <circle cx="18" cy="18" r="6" fill="#ff9a0a" />
          </Art>
        </Slot>
        <Stack $w={67} $mr={5} $align="center">
          <Label $size={18} $ls={-0.7} $lh={23} $color="#fff">ENG</Label>
          <Label $size={18} $ls={-0.2} $lh={23} $color="#fff">GA</Label>
        </Stack>
        <Slot $w={36} $dy={-1}>
          <Line c="#fff" w={24} h={18} sw={1.7}>
            <path d="M1 6.500a15.500 15.500 0 0122 0M4.300 9.900a10.800 10.800 0 0115.400 0M7.600 13.200a6.200 6.200 0 018.800 0" />
            <circle cx="12" cy="15.800" r="1.400" fill="#fff" />
          </Line>
        </Slot>
        <Slot $w={36} $dy={-1}>
          <Line c="#fff" w={24} h={20} sw={1.6}>
            <path d="M1 6.500h4L10.500 2v16L5 13.500H1z" />
            <path d="M13.500 6.500q2 3.500 0 7" />
            <path d="M16.500 4q3.500 6 0 12M19.500 1.500q5 8.500 0 17" stroke="#6c6c6c" />
          </Line>
        </Slot>
        <Slot $w={36} $dy={-1}>
          <Line c="#fff" w={24} h={20} sw={1.6}>
            <path d="M9.500 4.500h9a2.500 2.500 0 012.500 2.500v9a2.500 2.500 0 01-2.500 2.500H9.500A2.500 2.500 0 017 16" />
            <path d="M10 7.500h8v8h-8.500z" fill="#fff" stroke="none" />
            <path d="M22.800 9v5" strokeWidth="2" />
            <path d="M1 4.500h6.500v3A3 3 0 014.200 10 3 3 0 011 7.500zM2.500 4V1M6 4V1M4.200 10v7.500" fill="#fff" />
          </Line>
        </Slot>
        <Stack $w={109} $align="flex-end">
          <Label $size={18} $ls={-1.5} $lh={23} $color="#fff">11:26</Label>
          <Label $size={18} $ls={-0.25} $lh={23} $color="#fff">27/02/2023</Label>
        </Stack>
        <NotifyBadge><Label $size={17} $lh={24} $color="#10202c">4</Label></NotifyBadge>
      </Taskbar>
    </Desktop>
  );
}
